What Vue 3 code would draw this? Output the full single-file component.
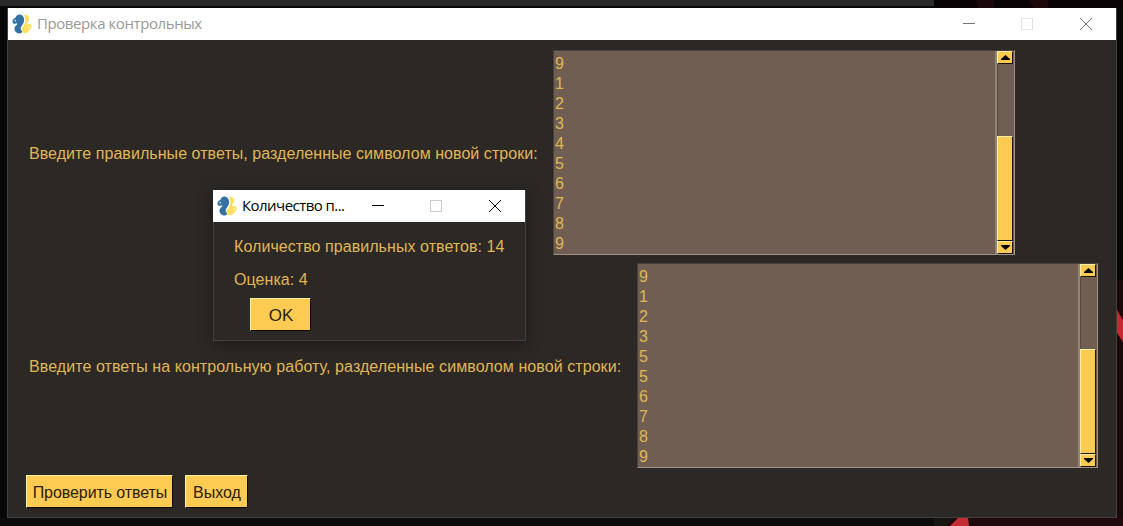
<!-- App.vue -->

<script setup>
import { ref } from 'vue'

const title = 'Проверка контрольных'

const fields = ref([
  {
    id: 'correct',
    label: 'Введите правильные ответы, разделенные символом новой строки:',
    lines: [9, 1, 2, 3, 4, 5, 6, 7, 8, 9]
  },
  {
    id: 'work',
    label: 'Введите ответы на контрольную работу, разделенные символом новой строки:',
    lines: [9, 1, 2, 3, 5, 5, 6, 7, 8, 9]
  }
])

const result = ref({ count: 14, mark: 4 })
</script>

<template>
  <div class="desktop">
    <div class="strip strip-top"></div>
    <div class="strip strip-bottom"></div>
    <svg class="wallpaper" width="211" height="526" viewBox="0 0 211 526">
      <rect x="22" y="0" width="189" height="8" fill="#080304" />
      <path d="M64 0h18v8h-16zM116 0h20v8h-14z" fill="#1c080a" />
      <rect x="205" y="280" width="6" height="246" fill="#1b080b" />
      <path d="M205 310l6 10v22l-6-9z" fill="#c9262f" />
      <rect x="22" y="518" width="189" height="8" fill="#20090d" />
      <path d="M22 518h20l-8 8h-12z" fill="#17150f" />
      <path d="M46 518h10l1 8h-19z" fill="#c52d35" />
    </svg>

    <div class="window main-window">
      <div class="titlebar">
        <svg class="logo" width="20" height="20" viewBox="0 0 20 20">
          <use href="#snakes" />
        </svg>
        <span class="title">{{ title }}</span>
        <svg class="controls" width="130" height="14" viewBox="0 0 130 14" fill="none">
          <path d="M0 6.5h12" stroke="#777" />
          <rect x="58.5" y="1.5" width="11" height="11" stroke="#e2e2e2" />
          <path d="M117 1l12 12M129 1l-12 12" stroke="#777" />
        </svg>
      </div>
      <div class="content">
        <div v-for="field in fields" :key="field.id" class="row" :class="field.id">
          <span class="label">{{ field.label }}</span>
          <div class="box">
            <div class="lines">
              <div v-for="(line, i) in field.lines" :key="i">{{ line }}</div>
            </div>
            <div class="scrollbar">
              <div class="arrow">
                <svg width="9" height="5" viewBox="0 0 9 5"><path d="M4.5 0L9 4v1H0V4z" /></svg>
              </div>
              <div class="track"></div>
              <div class="thumb"></div>
              <div class="arrow">
                <svg width="9" height="5" viewBox="0 0 9 5"><path d="M4.5 5L9 1V0H0v1z" /></svg>
              </div>
            </div>
          </div>
        </div>
        <div class="buttons">
          <button class="btn check">Проверить ответы</button>
          <button class="btn exit">Выход</button>
        </div>
      </div>
    </div>

    <div class="window popup">
      <div class="titlebar">
        <svg class="logo" width="20" height="20" viewBox="0 0 20 20">
          <g id="snakes">
            <path
              d="M10.2 1.4C8.8.3 6.2.3 4.8 1.5C3.8 2.400 4 3.300 3.200 3.900C1.600 4.600.4 5.800.5 7.800C.6 9.200 1.500 9.900 2.700 9.900C3.600 9.900 4.200 9.200 4.900 9.400C5.600 9.700 5.100 10.400 4.500 11C2.900 12.400 2.300 13.700 2.500 15.500C2.800 17.900 4.900 19.400 7.400 19.400C9.400 19.400 10.400 18.500 10 17.300C9.600 16 8.400 15.500 8.700 13.900C9.100 11.800 11.900 9.900 12.100 6.700C12.200 4.500 11.700 2.600 10.200 1.400Z"
              fill="#3571a3"
            />
            <path
              d="M12 1C14.200.2 17.100 1.500 17.300 4.300C17.400 6.700 15.400 7.700 15.200 9.200C15.100 10.200 16 10.500 16.900 10.100C18.300 9.700 19.700 10.700 19.600 12.500C19.500 14.500 18 15.100 17.200 16.200C16.100 17.900 14.800 19.400 12.700 19.300C10.900 19.200 9.700 17.800 9.700 15.600C9.700 13.300 13.100 10.700 13.300 7.200C13.400 4.500 13 2.700 12 1Z"
              fill="#ffdf5b"
            />
            <circle cx="3.300" cy="6.800" r=".8" fill="#fff" />
            <circle cx="17" cy="13.200" r=".8" fill="#fff" />
          </g>
        </svg>
        <span class="title">Количество п...</span>
        <svg class="controls" width="130" height="14" viewBox="0 0 130 14" fill="none">
          <path d="M0 6.5h12" stroke="#000" />
          <rect x="58.5" y="1.5" width="11" height="11" stroke="#ccc" />
          <path d="M117 1l12 12M129 1l-12 12" stroke="#000" />
        </svg>
      </div>
      <div class="popup-content">
        <div class="count">Количество правильных ответов: {{ result.count }}</div>
        <div class="mark">Оценка: {{ result.mark }}</div>
        <button class="btn ok">OK</button>
      </div>
    </div>
  </div>
</template>

<style>
body {
  margin: 0;
  overflow: hidden;
}
</style>

<style scoped>
.desktop {
  position: relative;
  width: 1123px;
  height: 526px;
  overflow: hidden;
  background: #080808;
  font-family: "Liberation Sans", Arial, sans-serif;
  font-size: 16px;
}

.strip {
  position: absolute;
  left: 0;
  width: 934px;
}

.strip-top {
  top: 0;
  height: 6px;
  background: #2a2a2a;
}

.strip-bottom {
  top: 518px;
  height: 8px;
  background: #0b0b0b;
}

.wallpaper {
  position: absolute;
  left: 912px;
  top: 0;
}

.window {
  position: absolute;
  box-sizing: border-box;
  background: #2c2825;
  color: #e0b656;
}

.main-window {
  left: 7px;
  top: 8px;
  width: 1110px;
  height: 510px;
  border: 1px solid #41403e;
  border-top: none;
}

.popup {
  left: 213px;
  top: 190px;
  width: 313px;
  height: 151px;
  border: 1px solid #41403e;
  border-top: none;
  box-shadow: 0 3px 14px rgba(0, 0, 0, 0.4);
}

.titlebar {
  display: flex;
  align-items: center;
  height: 32px;
  background: #fff;
  font-family: "Open Sans", "Noto Sans", sans-serif;
}

.main-window .titlebar {
  padding-left: 4px;
  padding-right: 23px;
}

.popup .titlebar {
  margin-left: -1px;
  padding-left: 4px;
  padding-right: 23px;
}

.logo {
  margin-top: -1px;
}

.title {
  flex: 1;
  margin-left: 5px;
  padding-bottom: 2px;
  font-size: 15px;
  line-height: 30px;
  letter-spacing: -0.42px;
  white-space: nowrap;
  color: #999;
}

.popup .title {
  letter-spacing: -0.55px;
  color: #000;
}

.content {
  padding: 10px 0 0 21px;
}

.row {
  display: flex;
  align-items: center;
  height: 205px;
  margin-bottom: 8px;
}

.label {
  box-sizing: border-box;
  width: 524px;
  padding-top: 2px;
  letter-spacing: 0.055px;
  white-space: nowrap;
}

.work .label {
  width: 608px;
  letter-spacing: 0.075px;
}

.box {
  display: flex;
  box-sizing: border-box;
  width: 462px;
  height: 205px;
  border: 1px solid #4a403a;
  border-right-color: #a09286;
  border-bottom-color: #a09286;
  background: #705e52;
}

.work .box {
  width: 461px;
}

.lines {
  flex: 1;
  padding: 3px 0 0 1px;
  line-height: 20px;
}

.scrollbar {
  display: flex;
  flex-direction: column;
  box-sizing: border-box;
  width: 19px;
  border-left: 2px solid #92847a;
  padding-right: 1px;
}

.arrow,
.thumb {
  box-sizing: border-box;
  background: #fdcb52;
  border: 1px solid;
  border-color: #fff0a8 #191207 #191207 #fff0a8;
}

.arrow {
  display: flex;
  align-items: center;
  justify-content: center;
  height: 13px;
}

.track {
  flex: 1;
  border-left: 1px solid #584a40;
}

.thumb {
  height: 105px;
}

.buttons {
  display: flex;
  gap: 12px;
  margin: -1px 0 0 -3px;
}

.btn {
  height: 33px;
  padding: 3px 0 0 1px;
  border: 1px solid;
  border-color: #fff0a8 #0c0905 #0c0905 #fff0a8;
  background: #fdcb52;
  color: #2c210e;
  font: inherit;
  white-space: nowrap;
}

.check {
  width: 147px;
  letter-spacing: -0.08px;
}

.exit {
  width: 63px;
}

.ok {
  display: block;
  width: 61px;
  margin: 8px 0 0 16px;
  font-size: 17px;
}

.popup-content {
  padding: 15px 0 0 20px;
  line-height: 20px;
}

.count,
.mark {
  letter-spacing: 0.06px;
}

.mark {
  margin-top: 13px;
}
</style>
